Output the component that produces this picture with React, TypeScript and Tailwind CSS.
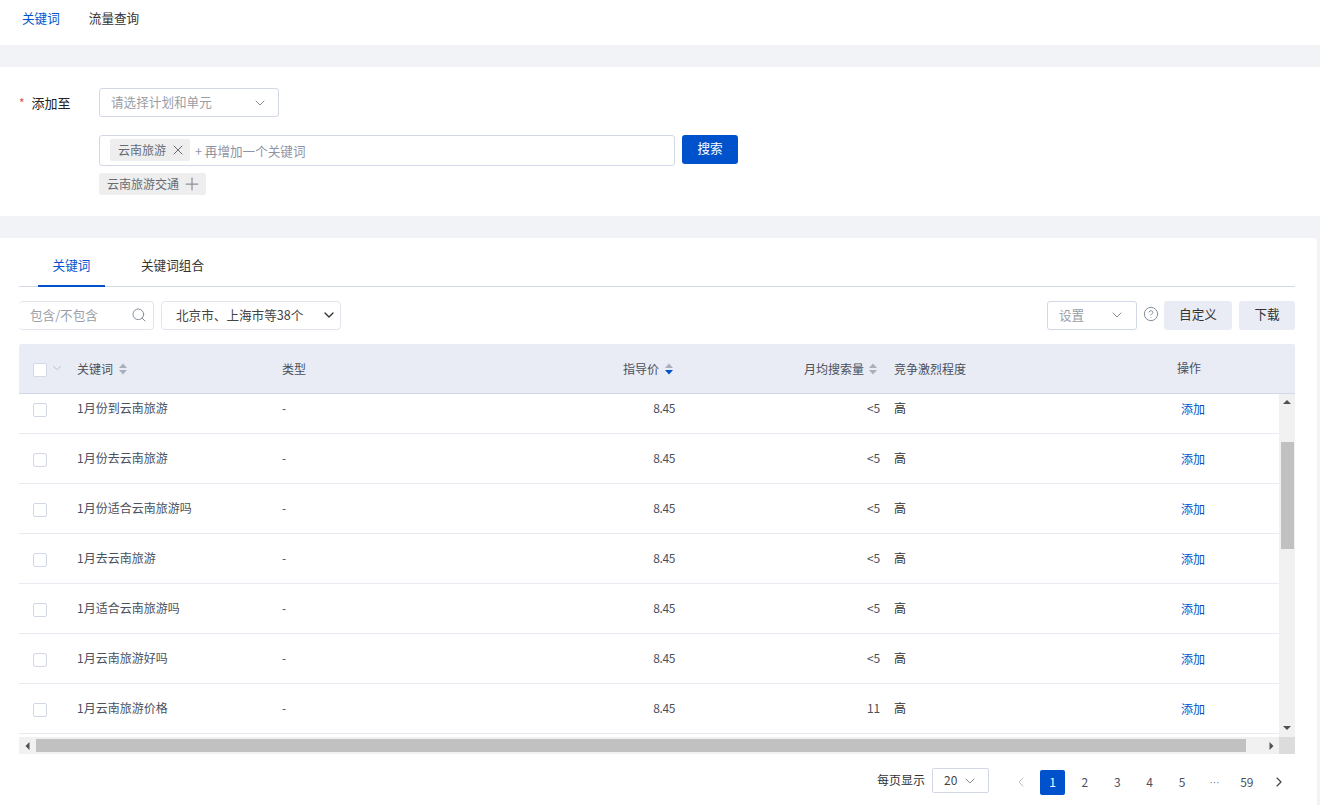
import React from 'react'
import { ChevronDown, ChevronLeft, ChevronRight, CircleHelp, Plus, Search, X } from 'lucide-react'

const rows = [
    { name: '1月份到云南旅游', volume: '<5' },
    { name: '1月份去云南旅游', volume: '<5' },
    { name: '1月份适合云南旅游吗', volume: '<5' },
    { name: '1月去云南旅游', volume: '<5' },
    { name: '1月适合云南旅游吗', volume: '<5' },
    { name: '1月云南旅游好吗', volume: '<5' },
    { name: '1月云南旅游价格', volume: '11' },
]

function SortIcon({ active = false }: { active?: boolean }) {
    return (
        <svg width="8" height="12" viewBox="0 0 8 12" className="shrink-0">
            <path d="M4 0.5 L8 5 L0 5 Z" fill="#a9afbd" />
            <path d="M4 11.5 L8 7 L0 7 Z" fill={active ? '#0052cc' : '#a9afbd'} />
        </svg>
    )
}

function Checkbox() {
    return <span className="block w-[14px] h-[14px] bg-white border border-[#d3d8e6] rounded-[2px] shrink-0" />
}

function Arrow({ dir }: { dir: 'up' | 'down' | 'left' | 'right' }) {
    const d = {
        up: 'M4 1 L8 5 L0 5 Z',
        down: 'M0 2 L8 2 L4 6 Z',
        left: 'M5.5 0 L5.5 8 L1.5 4 Z',
        right: 'M2.5 0 L2.5 8 L6.5 4 Z',
    }[dir]
    return (
        <svg width="8" height="8" viewBox="0 0 8 8">
            <path d={d} fill="#505050" />
        </svg>
    )
}

function Row({ name, volume }: { name: string; volume: string }) {
    return (
        <div className="flex items-center h-[50px] pb-[2px] border-b border-[#e9ebf2] text-[12px] text-[#4a505c]">
            <div className="w-[58px] pl-[14px] mt-[4px]">
                <Checkbox />
            </div>
            <div className="w-[205px]">{name}</div>
            <div className="w-[393px] flex justify-between">
                <span>-</span>
                <span className="tracking-[-0.4px]">8.45</span>
            </div>
            <div className="w-[205px] text-right tracking-[-0.2px]">{volume}</div>
            <div className="w-[301px] pl-[14px] text-[#333]">高</div>
            <div className="text-[#0052cc] mt-[3px]">添加</div>
        </div>
    )
}

export default function App() {
    return (
        <div className="w-[1320px] h-[805px] overflow-hidden bg-[#f2f3f7] text-[12.6px] text-[#333] font-['Noto_Sans_CJK_SC','Noto_Sans',sans-serif]">
            <nav className="h-[45px] bg-white flex items-center pb-[9px] pl-[22px] gap-[29px]">
                <span className="text-[#0052cc]">关键词</span>
                <span>流量查询</span>
            </nav>

            <section className="mt-[22px] h-[149px] bg-white pt-[21px]">
                <div className="flex items-center h-[29px]">
                    <span className="w-[99px] pl-[19px] flex items-center">
                        <span className="text-[#d9534f] text-[12px] mr-[7px]">*</span>
                        <span className="text-[#222] text-[13px]">添加至</span>
                    </span>
                    <div className="w-[180px] h-[29px] border border-[#d3d8e6] rounded-[3px] flex items-center justify-between pl-[11px] pr-[10px] text-[#999ea8]">
                        <span>请选择计划和单元</span>
                        <ChevronDown size={16} strokeWidth={1.5} className="text-[#878d99]" />
                    </div>
                </div>
                <div className="flex items-start gap-[7px] mt-[18px] ml-[99px]">
                    <div className="w-[576px] h-[31px] border border-[#d3d8e6] rounded-[3px] flex items-center pl-[10px]">
                        <span className="h-[22px] w-[80px] bg-[#eeeeee] rounded-[2px] flex items-center pl-[8px] text-[12px] text-[#666b75] -mt-[2px]">
                            云南旅游
                            <X size={16} strokeWidth={1.5} className="ml-[4px] text-[#666b75]" />
                        </span>
                        <span className="ml-[5px] mt-[2px] text-[#8e94a3]">+ 再增加一个关键词</span>
                    </div>
                    <button className="w-[56px] h-[29px] pb-[2px] bg-[#0052cc] text-white rounded-[3px]">搜索</button>
                </div>
                <div className="ml-[99px] mt-[7px] w-[107px] h-[22px] bg-[#eeeeee] rounded-[2px] flex items-center pl-[8px] text-[#666b75] text-[12px]">
                    云南旅游交通
                    <Plus size={20} strokeWidth={1.5} className="ml-[3px] text-[#8a8f99]" />
                </div>
            </section>

            <section className="mt-[22px] w-[1317px] h-[567px] bg-white rounded-tr-[4px] pl-[19px] pr-[22px]">
                <div className="h-[49px] border-b border-[#d3d8e6] flex pl-[19px]">
                    <div className="w-[67px] h-[49px] border-b-2 border-[#0052cc] text-[#0052cc] text-center pt-[18px] leading-[18px]">关键词</div>
                    <div className="ml-[36px] pt-[18px] leading-[18px]">关键词组合</div>
                </div>

                <div className="flex items-center h-[29px] mt-[14px]">
                    <div className="w-[135px] h-[29px] pb-[1px] border border-[#e1e4ec] border-l-0 rounded-[4px] flex items-center justify-between pl-[11px] pr-[6px] text-[#999ea8]">
                        <span>包含/不包含</span>
                        <Search size={16} strokeWidth={1.5} className="text-[#878d99]" />
                    </div>
                    <div className="w-[180px] h-[29px] pb-[1px] ml-[7px] border border-[#e1e4ec] rounded-[4px] flex items-center justify-between pl-[14px] pr-[3px] text-[#444]">
                        <span>北京市、上海市等38个</span>
                        <ChevronDown size={16} strokeWidth={2} className="text-[#333]" />
                    </div>
                    <div className="ml-auto w-[90px] h-[29px] pb-[1px] border border-[#d3d8e6] rounded-[3px] flex items-center justify-between pl-[11px] pr-[11px] text-[#999ea8]">
                        <span>设置</span>
                        <ChevronDown size={16} strokeWidth={1.5} className="text-[#878d99]" />
                    </div>
                    <CircleHelp size={16} strokeWidth={1.5} className="ml-[6px] text-[#878d99] -mt-[3px]" />
                    <button className="ml-[5px] w-[68px] h-[29px] pb-[2px] bg-[#e9ecf4] rounded-[3px] text-[#333]">自定义</button>
                    <button className="ml-[7px] w-[56px] h-[29px] pb-[2px] bg-[#e9ecf4] rounded-[3px] text-[#333]">下载</button>
                </div>

                <div className="mt-[14px] flex items-center h-[50px] bg-[#e9ecf4] border-b border-[#d3d8e6] rounded-t-[2px] text-[12px] text-[#4a505c]">
                    <div className="w-[58px] pl-[14px] flex items-center gap-[3px]">
                        <span className="mt-[2px]">
                            <Checkbox />
                        </span>
                        <ChevronDown size={14} strokeWidth={1.25} className="text-[#a9afbd] -mt-[1px]" />
                    </div>
                    <div className="w-[205px] flex items-center gap-[6px]">
                        关键词
                        <SortIcon />
                    </div>
                    <div className="w-[393px] flex items-center justify-between pr-[2px]">
                        <span>类型</span>
                        <span className="flex items-center gap-[6px]">
                            指导价
                            <SortIcon active />
                        </span>
                    </div>
                    <div className="w-[205px] flex items-center justify-end gap-[5px] pr-[3px]">
                        月均搜索量
                        <SortIcon />
                    </div>
                    <div className="w-[297px] pl-[14px]">竞争激烈程度</div>
                    <div className="-mt-[2px]">操作</div>
                </div>

                <div className="flex h-[343px]">
                    <div className="w-[1260px] overflow-hidden">
                        <div className="-mt-[10px]">
                            {rows.map(row => (
                                <Row key={row.name} name={row.name} volume={row.volume} />
                            ))}
                        </div>
                    </div>
                    <div className="w-[16px] bg-[#f1f1f1] flex flex-col items-center justify-between py-[5px] relative">
                        <Arrow dir="up" />
                        <Arrow dir="down" />
                        <div className="absolute top-[48px] left-[2px] w-[13px] h-[107px] bg-[#c1c1c1]" />
                    </div>
                </div>

                <div className="flex h-[17px] bg-[#f1f1f1] items-center">
                    <div className="w-[17px] flex justify-center">
                        <Arrow dir="left" />
                    </div>
                    <div className="w-[1210px] h-[13px] bg-[#c1c1c1]" />
                    <div className="flex-1 flex justify-end pr-[4px]">
                        <Arrow dir="right" />
                    </div>
                    <div className="w-[16px] h-[17px] bg-[#dcdcdc]" />
                </div>

                <div className="flex items-start mt-[14px] text-[12px]">
                    <div className="ml-[858px] h-[25px] pb-[2px] flex items-center text-[#333]">每页显示</div>
                    <div className="ml-[7px] w-[57px] h-[25px] border border-[#d3d8e6] rounded-[2px] flex items-center justify-between pl-[11px] pr-[10px] text-[#444]">
                        <span className="-mt-[2px]">20</span>
                        <ChevronDown size={16} strokeWidth={1.5} className="text-[#878d99]" />
                    </div>
                    <div className="ml-[18px] mt-[2px] flex items-center h-[25px] pb-[1px] text-[#4a505c]">
                        <span className="w-[25px] flex justify-center mr-[8px] ml-[1px]">
                            <ChevronLeft size={16} strokeWidth={1.5} className="text-[#b6bbc7]" />
                        </span>
                        <span className="-ml-[1px] w-[25px] h-[25px] bg-[#0052cc] text-white rounded-[2px] flex items-center justify-center">1</span>
                        {['2', '3', '4', '5'].map(page => (
                            <span key={page} className="w-[25px] ml-[7.4px] text-center">{page}</span>
                        ))}
                        <span className="w-[25px] ml-[7.4px] text-center text-[10px] text-[#6b7280] font-['Liberation_Sans',sans-serif]">···</span>
                        <span className="w-[25px] ml-[7.4px] text-center">59</span>
                        <span className="w-[25px] ml-[7.5px] flex justify-center">
                            <ChevronRight size={16} strokeWidth={1.75} className="text-[#444]" />
                        </span>
                    </div>
                </div>
            </section>
        </div>
    )
}
